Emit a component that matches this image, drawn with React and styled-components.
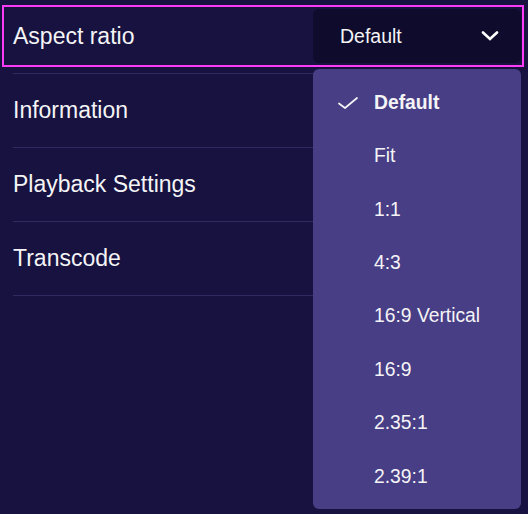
import styled, { createGlobalStyle } from 'styled-components';

const GlobalStyle = createGlobalStyle`
  html, body {
    margin: 0;
    background-color: #17123f;
  }
  body {
    font-family: "Liberation Sans", Arial, sans-serif;
    color: #f4f4f6;
  }
`;

const Page = styled.div`
  width: 528px;
  height: 514px;
  overflow: hidden;
  padding: 0 6px 0 4px;
  box-sizing: border-box;
`;

const Item = styled.div`
  padding: 7px 0 8px;
`;

const Divider = styled.div`
  height: 1px;
  margin: 0 9px;
  background-color: #302a5e;
`;

const Row = styled.div`
  height: 58px;
  display: flex;
  align-items: center;
  justify-content: space-between;
  padding: 0 1px 0 9px;
  outline: ${(props) => (props.focused ? '2px solid #fb3cf6' : 'none')};
`;

const Label = styled.span`
  font-size: 23px;
`;

const SelectWrap = styled.div`
  position: relative;
  width: 208px;
`;

const SelectBox = styled.div`
  height: 54px;
  display: flex;
  align-items: center;
  justify-content: space-between;
  padding: 0 22px 0 27px;
  background-color: #0e0b2c;
  border-radius: 6px;
  font-size: 19.5px;
`;

const Menu = styled.div`
  position: absolute;
  top: calc(100% + 6px);
  left: 0;
  width: 100%;
  padding: 7px 0 5px;
  background-color: #483e85;
  border-radius: 6px;
  z-index: 2;
`;

const MenuItem = styled.div`
  height: 53.45px;
  display: flex;
  align-items: center;
  padding-left: 25px;
  font-size: 19.3px;
  font-weight: ${(props) => (props.selected ? 700 : 400)};
`;

const CheckSlot = styled.span`
  width: 36px;
  display: flex;
  align-items: center;
`;

const Chevron = () => (
  <svg width="18" height="10" viewBox="0 0 18 10" fill="none">
    <polyline points="2,1.5 9,8 16,1.5" stroke="#ffffff" strokeWidth="2.6" strokeLinecap="round" strokeLinejoin="miter" />
  </svg>
);

const Check = () => (
  <svg width="20" height="12" viewBox="0 0 20 12" fill="none">
    <polyline points="1,6.5 7,11 19,1" stroke="#f4f4f6" strokeWidth="1.7" strokeLinecap="round" strokeLinejoin="round" />
  </svg>
);

const ratios = ['Default', 'Fit', '1:1', '4:3', '16:9 Vertical', '16:9', '2.35:1', '2.39:1'];
const sections = ['Information', 'Playback Settings', 'Transcode'];

const App = () => {
  const current = 'Default';

  return (
    <Page>
      <GlobalStyle />
      <Item>
        <Row focused>
          <Label>Aspect ratio</Label>
          <SelectWrap>
            <SelectBox>
              <span>{current}</span>
              <Chevron />
            </SelectBox>
            <Menu>
              {ratios.map((r) => (
                <MenuItem key={r} selected={r === current}>
                  <CheckSlot>{r === current && <Check />}</CheckSlot>
                  {r}
                </MenuItem>
              ))}
            </Menu>
          </SelectWrap>
        </Row>
      </Item>
      <Divider />
      {sections.map((s) => (
        <div key={s}>
          <Item>
            <Row>
              <Label>{s}</Label>
            </Row>
          </Item>
          <Divider />
        </div>
      ))}
    </Page>
  );
};

export default App;
